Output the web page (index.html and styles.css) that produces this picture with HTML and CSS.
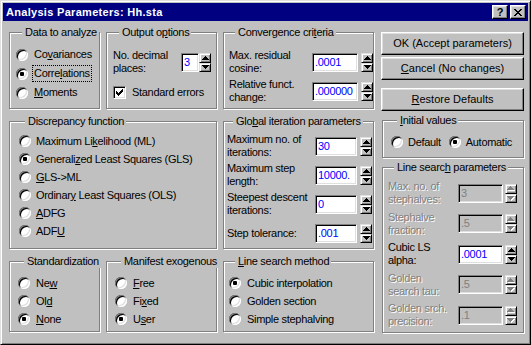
FILE: index.html
```html
<!DOCTYPE html>
<html lang="en">
<head>
    <meta charset="UTF-8">
    <meta name="viewport" content="width=device-width, initial-scale=1.0">
    <title>Analysis Parameters: Hh.sta</title>
    <link rel="stylesheet" href="styles.css">
</head>
<body>
    <svg class="defs" width="0" height="0">
        <symbol id="au" viewBox="0 0 7 4"><path d="M3 0h1v1h-1z M2 1h3v1h-3z M1 2h5v1h-5z M0 3h7v1h-7z"/></symbol>
        <symbol id="ad" viewBox="0 0 7 4"><path d="M0 0h7v1h-7z M1 1h5v1h-5z M2 2h3v1h-3z M3 3h1v1h-1z"/></symbol>
    </svg>

    <div class="window">
        <div class="titlebar">
            <span class="title">Analysis Parameters: Hh.sta</span>
            <div class="title-btns">
                <button class="tbtn">?</button>
                <button class="tbtn">
                    <svg width="8" height="7" viewBox="0 0 8 7" shape-rendering="crispEdges"><path d="M0 0h2v1h-2z M6 0h2v1h-2z M1 1h2v1h-2z M5 1h2v1h-2z M2 2h4v1h-4z M3 3h2v1h-2z M2 4h4v1h-4z M1 5h2v1h-2z M5 5h2v1h-2z M0 6h2v1h-2z M6 6h2v1h-2z"/></svg>
                </button>
            </div>
        </div>

        <div class="content">
            <div class="groups">
                <fieldset class="group data">
                    <legend>Data to analyze</legend>
                    <label class="opt"><span class="radio"></span><span>Co<u>v</u>ariances</span></label>
                    <label class="opt"><span class="radio on"></span><span class="focus">Corre<u>l</u>ations</span></label>
                    <label class="opt"><span class="radio"></span><span><u>M</u>oments</span></label>
                </fieldset>

                <fieldset class="group output">
                    <legend>Output o<u>p</u>tions</legend>
                    <div class="row">
                        <span class="lbl">No. decimal<br>places:</span>
                        <span class="input">3</span>
                        <span class="spin">
                            <span class="sbtn up"><svg width="7" height="4"><use href="#au"/></svg></span>
                            <span class="sbtn dn"><svg width="7" height="4"><use href="#ad"/></svg></span>
                        </span>
                    </div>
                    <label class="opt check-row">
                        <span class="check"><svg width="7" height="7" viewBox="0 0 7 7" shape-rendering="crispEdges"><path d="M6 0h1v1h-1z M5 1h2v1h-2z M0 2h1v1h-1z M4 2h3v1h-3z M0 3h2v1h-2z M3 3h3v1h-3z M0 4h5v1h-5z M1 5h3v1h-3z M2 6h1v1h-1z"/></svg></span>
                        <span>Standard errors</span>
                    </label>
                </fieldset>

                <fieldset class="group conv">
                    <legend>Convergence cri<u>t</u>eria</legend>
                    <div class="rows">
                        <div class="row">
                            <span class="lbl">Max. residual<br>cosine:</span>
                            <span class="input">.0001</span>
                            <span class="spin">
                                <span class="sbtn up"><svg width="7" height="4"><use href="#au"/></svg></span>
                                <span class="sbtn dn"><svg width="7" height="4"><use href="#ad"/></svg></span>
                            </span>
                        </div>
                        <div class="row">
                            <span class="lbl">Relative funct.<br>change:</span>
                            <span class="input">.000000</span>
                            <span class="spin">
                                <span class="sbtn up"><svg width="7" height="4"><use href="#au"/></svg></span>
                                <span class="sbtn dn"><svg width="7" height="4"><use href="#ad"/></svg></span>
                            </span>
                        </div>
                    </div>
                </fieldset>

                <fieldset class="group discrepancy">
                    <legend>Discrepancy function</legend>
                    <label class="opt"><span class="radio"></span><span>Maximum Li<u>k</u>elihood (ML)</span></label>
                    <label class="opt"><span class="radio on"></span><span>Generali<u>z</u>ed Least Squares (GLS)</span></label>
                    <label class="opt"><span class="radio"></span><span><u>G</u>LS-&gt;ML</span></label>
                    <label class="opt"><span class="radio"></span><span>Ordinar<u>y</u> Least Squares (OLS)</span></label>
                    <label class="opt"><span class="radio"></span><span><u>A</u>DFG</span></label>
                    <label class="opt"><span class="radio"></span><span>ADF<u>U</u></span></label>
                </fieldset>

                <fieldset class="group global">
                    <legend>Glo<u>b</u>al iteration parameters</legend>
                    <div class="rows">
                        <div class="row">
                            <span class="lbl">Maximum no. of<br>iterations:</span>
                            <span class="input">30</span>
                            <span class="spin">
                                <span class="sbtn up"><svg width="7" height="4"><use href="#au"/></svg></span>
                                <span class="sbtn dn"><svg width="7" height="4"><use href="#ad"/></svg></span>
                            </span>
                        </div>
                        <div class="row">
                            <span class="lbl">Maximum step<br>length:</span>
                            <span class="input">10000.</span>
                            <span class="spin">
                                <span class="sbtn up"><svg width="7" height="4"><use href="#au"/></svg></span>
                                <span class="sbtn dn"><svg width="7" height="4"><use href="#ad"/></svg></span>
                            </span>
                        </div>
                        <div class="row">
                            <span class="lbl">Steepest descent<br>iterations:</span>
                            <span class="input">0</span>
                            <span class="spin">
                                <span class="sbtn up"><svg width="7" height="4"><use href="#au"/></svg></span>
                                <span class="sbtn dn"><svg width="7" height="4"><use href="#ad"/></svg></span>
                            </span>
                        </div>
                        <div class="row">
                            <span class="lbl">Step tolerance:</span>
                            <span class="input">.001</span>
                            <span class="spin">
                                <span class="sbtn up"><svg width="7" height="4"><use href="#au"/></svg></span>
                                <span class="sbtn dn"><svg width="7" height="4"><use href="#ad"/></svg></span>
                            </span>
                        </div>
                    </div>
                </fieldset>

                <fieldset class="group stdz">
                    <legend>Standardization</legend>
                    <label class="opt"><span class="radio"></span><span>Ne<u>w</u></span></label>
                    <label class="opt"><span class="radio"></span><span>Ol<u>d</u></span></label>
                    <label class="opt"><span class="radio on"></span><span><u>N</u>one</span></label>
                </fieldset>

                <fieldset class="group manifest">
                    <legend>Manifest exogenous</legend>
                    <label class="opt"><span class="radio"></span><span><u>F</u>ree</span></label>
                    <label class="opt"><span class="radio"></span><span>Fi<u>x</u>ed</span></label>
                    <label class="opt"><span class="radio on"></span><span>U<u>s</u>er</span></label>
                </fieldset>

                <fieldset class="group method">
                    <legend><u>L</u>ine search method</legend>
                    <label class="opt"><span class="radio on"></span><span>Cubic interpolation</span></label>
                    <label class="opt"><span class="radio"></span><span>Golden section</span></label>
                    <label class="opt"><span class="radio"></span><span>Simple stephalving</span></label>
                </fieldset>
            </div>

            <div class="side">
                <button class="btn ok">OK (Accept parameters)</button>
                <button class="btn cancel"><u>C</u>ancel (No changes)</button>
                <button class="btn restore"><u>R</u>estore Defaults</button>

                <fieldset class="group initial">
                    <legend><u>I</u>nitial values</legend>
                    <div class="inline">
                        <label class="opt"><span class="radio"></span><span>Default</span></label>
                        <label class="opt"><span class="radio on"></span><span>Automatic</span></label>
                    </div>
                </fieldset>

                <fieldset class="group linesearch">
                    <legend>Line searc<u>h</u> parameters</legend>
                    <div class="rows">
                        <div class="row off">
                            <span class="lbl">Max. no. of<br>stephalves:</span>
                            <span class="input">3</span>
                            <span class="spin">
                                <span class="sbtn up"><svg width="8" height="5"><use href="#au" x="1" y="1" width="7" height="4" class="sh"/><use href="#au" width="7" height="4"/></svg></span>
                                <span class="sbtn dn"><svg width="8" height="5"><use href="#ad" x="1" y="1" width="7" height="4" class="sh"/><use href="#ad" width="7" height="4"/></svg></span>
                            </span>
                        </div>
                        <div class="row off">
                            <span class="lbl">Stephalve<br>fraction:</span>
                            <span class="input">.5</span>
                            <span class="spin">
                                <span class="sbtn up"><svg width="8" height="5"><use href="#au" x="1" y="1" width="7" height="4" class="sh"/><use href="#au" width="7" height="4"/></svg></span>
                                <span class="sbtn dn"><svg width="8" height="5"><use href="#ad" x="1" y="1" width="7" height="4" class="sh"/><use href="#ad" width="7" height="4"/></svg></span>
                            </span>
                        </div>
                        <div class="row">
                            <span class="lbl">Cubic LS<br>alpha:</span>
                            <span class="input">.0001</span>
                            <span class="spin">
                                <span class="sbtn up"><svg width="7" height="4"><use href="#au"/></svg></span>
                                <span class="sbtn dn"><svg width="7" height="4"><use href="#ad"/></svg></span>
                            </span>
                        </div>
                        <div class="row off">
                            <span class="lbl">Golden<br>search tau:</span>
                            <span class="input">.5</span>
                            <span class="spin">
                                <span class="sbtn up"><svg width="8" height="5"><use href="#au" x="1" y="1" width="7" height="4" class="sh"/><use href="#au" width="7" height="4"/></svg></span>
                                <span class="sbtn dn"><svg width="8" height="5"><use href="#ad" x="1" y="1" width="7" height="4" class="sh"/><use href="#ad" width="7" height="4"/></svg></span>
                            </span>
                        </div>
                        <div class="row off">
                            <span class="lbl">Golden srch.<br>precision:</span>
                            <span class="input">.1</span>
                            <span class="spin">
                                <span class="sbtn up"><svg width="8" height="5"><use href="#au" x="1" y="1" width="7" height="4" class="sh"/><use href="#au" width="7" height="4"/></svg></span>
                                <span class="sbtn dn"><svg width="8" height="5"><use href="#ad" x="1" y="1" width="7" height="4" class="sh"/><use href="#ad" width="7" height="4"/></svg></span>
                            </span>
                        </div>
                    </div>
                </fieldset>
            </div>
        </div>
    </div>
</body>
</html>
```

FILE: styles.css
```css
body {
    margin: 0;
    background: #c0c0c0;
    font-family: "Liberation Sans", Arial, sans-serif;
    font-size: 11px;
    letter-spacing: -0.3px;
    line-height: 13px;
    color: #000;
}
.defs {
    position: absolute;
}
.window {
    width: 531px;
    height: 345px;
    box-sizing: border-box;
    padding: 2px;
    border: 1px solid;
    border-color: #dfdfdf #000 #000 #dfdfdf;
    box-shadow: inset 1px 1px #fff, inset -1px -1px #808080;
}

/* title bar */
.titlebar {
    height: 18px;
    background: #000080;
    display: flex;
    align-items: center;
    justify-content: space-between;
    padding: 0 2px 0 3px;
}
.title {
    color: #fff;
    font-weight: bold;
    letter-spacing: 0.3px;
}
.title-btns {
    display: flex;
    gap: 2px;
}
.tbtn {
    width: 16px;
    height: 14px;
    box-sizing: border-box;
    padding: 0;
    background: #c0c0c0;
    border: 1px solid;
    border-color: #fff #000 #000 #fff;
    box-shadow: inset -1px -1px #808080, inset 1px 1px #dfdfdf;
    font: bold 11px/12px "Liberation Sans", Arial, sans-serif;
    color: #000;
    display: flex;
    align-items: center;
    justify-content: center;
}

/* layout */
.content {
    display: flex;
    gap: 7px;
    padding: 5px 0 0 6px;
}
.groups {
    display: grid;
    grid-template-columns: 91px 111px 151px;
    grid-template-rows: 83px 134px 77px;
    column-gap: 6px;
    row-gap: 6px;
}
.side {
    width: 143px;
    display: flex;
    flex-direction: column;
    padding-top: 6px;
}

/* group boxes */
.group {
    margin: 0;
    padding: 0;
    min-width: 0;
    box-sizing: border-box;
    border: 1px solid #808080;
    box-shadow: inset 1px 1px #fff, 1px 1px #fff;
}
.group legend {
    margin-left: 6px;
    padding: 0 2px 0 3px;
    background: #c0c0c0;
    line-height: 13px;
    white-space: nowrap;
}
.discrepancy {
    grid-column: span 2;
}

/* radio options */
.opt {
    display: flex;
    align-items: center;
    gap: 6px;
    height: 18px;
    white-space: nowrap;
}
.radio {
    width: 12px;
    height: 12px;
    flex: none;
    border-radius: 50%;
    background: #fff;
    box-shadow: inset 1px 1px #808080, inset -1px -1px #fff, inset 2px 2px #000, inset -2px -2px #dfdfdf;
    display: flex;
    align-items: center;
    justify-content: center;
}
.radio.on::after {
    content: "";
    width: 4px;
    height: 4px;
    border-radius: 1px;
    background: #000;
}
.focus {
    outline: 1px dotted #000;
    outline-offset: 1px;
}
.check {
    width: 13px;
    height: 13px;
    flex: none;
    box-sizing: border-box;
    background: #fff;
    border: 1px solid;
    border-color: #808080 #fff #fff #808080;
    box-shadow: inset 1px 1px #000, inset -1px -1px #dfdfdf;
    display: flex;
    align-items: center;
    justify-content: center;
}

/* label + edit + spinner rows */
.rows {
    display: flex;
    flex-direction: column;
    gap: 3px;
}
.row {
    display: flex;
    align-items: center;
    height: 26px;
    white-space: nowrap;
}
.input {
    height: 19px;
    box-sizing: border-box;
    background: #fff;
    color: #0000ff;
    border: 1px solid;
    border-color: #808080 #fff #fff #808080;
    box-shadow: inset 1px 1px #000, inset -1px -1px #dfdfdf;
    padding-left: 2px;
    line-height: 17px;
    overflow: hidden;
}
.spin {
    display: flex;
    flex-direction: column;
    width: 12px;
    height: 19px;
    flex: none;
}
.sbtn {
    box-sizing: border-box;
    height: 10px;
    background: #c0c0c0;
    border: 1px solid;
    border-color: #dfdfdf #000 #000 #dfdfdf;
    box-shadow: inset 1px 1px #fff, inset -1px -1px #808080;
    display: flex;
    align-items: center;
    justify-content: center;
}
.sbtn.dn {
    height: 9px;
}
.sbtn svg {
    display: block;
    fill: #000;
}
.off .lbl {
    color: #808080;
    text-shadow: 1px 1px 0 #fff;
}
.off .input {
    background: #c0c0c0;
    color: #808080;
}
.off .sbtn svg {
    fill: #808080;
}
.off .sbtn .sh {
    fill: #fff;
}

/* per group spacing */
.data {
    padding: 6px 0 0 6px;
}
.data .opt {
    height: 19px;
}
.output {
    padding: 10px 0 0 6px;
}
.output .lbl {
    width: 68px;
}
.output .input {
    width: 18px;
}
.check-row {
    margin-top: 8px;
    height: 19px;
}
.conv {
    padding: 10px 0 0 5px;
}
.conv .lbl {
    width: 83px;
}
.conv .input {
    width: 46px;
}
.conv .spin,
.global .spin {
    margin-left: 3px;
}
.discrepancy {
    padding: 4px 0 0 9px;
}
.discrepancy .opt {
    gap: 5px;
}
.global {
    padding: 5px 0 0 3px;
}
.global .lbl {
    width: 88px;
}
.global .input {
    width: 42px;
}
.stdz,
.manifest {
    padding: 6px 0 0 8px;
}
.method {
    padding: 6px 0 0 5px;
}

/* right column */
.btn {
    height: 23px;
    width: 100%;
    padding: 0;
    background: #c0c0c0;
    border: 1px solid;
    border-color: #fff #000 #000 #fff;
    box-shadow: inset -1px -1px #808080, inset 1px 1px #dfdfdf;
    font: inherit;
    color: #000;
}
.cancel {
    margin-top: 2px;
}
.restore {
    margin-top: 8px;
}
.initial {
    margin: 3px 0 0 1px;
    height: 44px;
    padding: 6px 0 0 8px;
}
.inline {
    display: flex;
    gap: 8px;
}
.inline .opt {
    gap: 5px;
}
.linesearch {
    margin: 3px 0 0 1px;
    height: 172px;
    padding: 6px 0 0 5px;
}
.linesearch .rows {
    gap: 4.5px;
}
.linesearch .lbl {
    width: 70px;
}
.linesearch .input {
    width: 45px;
}
.linesearch .spin {
    margin-left: 2px;
}
```
